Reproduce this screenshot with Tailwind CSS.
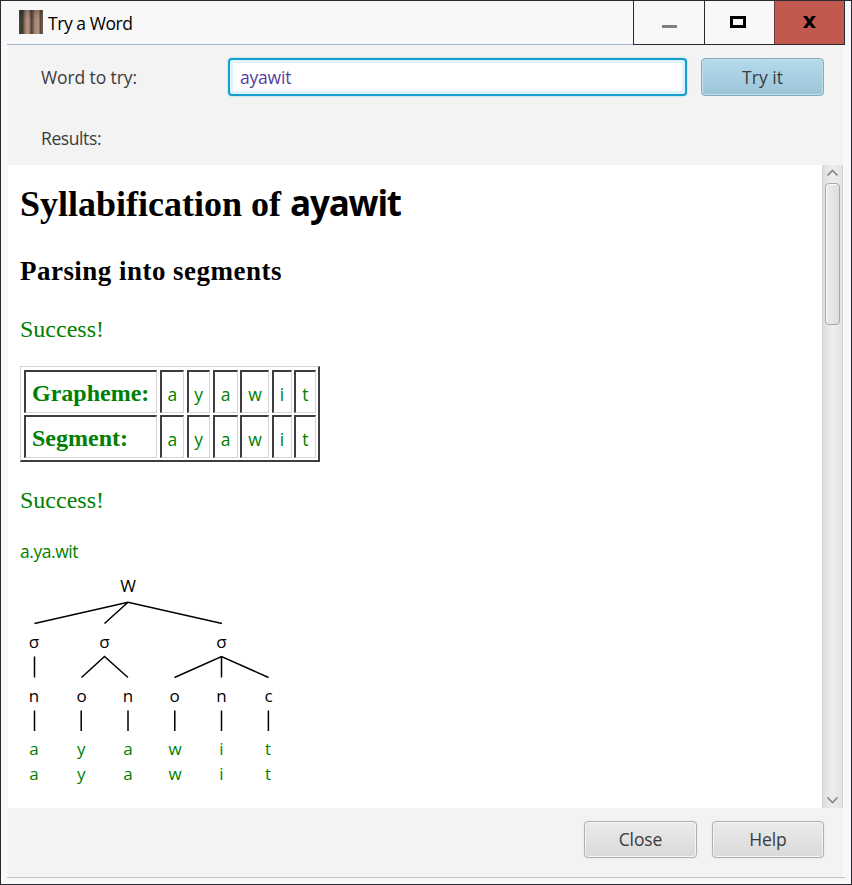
<!DOCTYPE html>
<html lang="en">
<head>
<meta charset="utf-8">
<title>Try a Word</title>
<script src="https://cdn.jsdelivr.net/npm/@tailwindcss/browser@4"></script>
</head>
<body class="h-[885px] w-[852px] overflow-hidden font-['Open_Sans','Noto_Sans',sans-serif] text-[17.5px]">
<div class="flex h-[885px] w-[852px] flex-col border border-[#2d2b31] bg-[#f8f8f8] pr-[6px] pl-[6px]">
  <header class="flex h-[44px] shrink-0">
    <div class="flex flex-1 items-start border-b border-[#a3b4c9] pl-[12px]">
      <svg class="mt-[9px] size-6" viewBox="0 0 24 24" aria-hidden="true">
        <defs>
          <linearGradient id="bark">
            <stop offset="0" stop-color="#45433b"/><stop offset=".15" stop-color="#3f3b34"/><stop offset=".24" stop-color="#8b715f"/>
            <stop offset=".34" stop-color="#b99580"/><stop offset=".43" stop-color="#a98572"/><stop offset=".5" stop-color="#4b423d"/>
            <stop offset=".58" stop-color="#66574d"/><stop offset=".66" stop-color="#a98672"/><stop offset=".82" stop-color="#b69079"/>
            <stop offset=".89" stop-color="#554941"/><stop offset="1" stop-color="#746257"/>
          </linearGradient>
          <linearGradient id="shade" x2="0" y2="1"><stop offset="0" stop-color="#000" stop-opacity=".2"/><stop offset=".4" stop-color="#000" stop-opacity="0"/></linearGradient>
        </defs>
        <path d="M0 0h24v24H0z" fill="url(#bark)"/><path d="M0 0h24v24H0z" fill="url(#shade)"/>
      </svg>
      <h1 class="mt-[10px] ml-[5px] leading-6 tracking-[-0.45px] text-black">Try a Word</h1>
    </div>
    <div class="flex border-r border-b border-l border-[#2d2b31]">
      <button class="flex w-[70px] items-center justify-center" aria-label="Minimize"><svg class="size-[18px]" viewBox="0 0 18 18"><path d="M2 11h15v3H2z" fill="#7f7f7f"/></svg></button>
      <button class="flex w-[70px] items-center justify-center border-l border-[#2d2b31] pr-[3px] pb-[1px]" aria-label="Maximize"><svg class="h-[12px] w-[16px]" viewBox="0 0 16 12"><path d="M1.500 1.500h13v9h-13z" fill="none" stroke="#000" stroke-width="3"/></svg></button>
      <button class="flex w-[70px] items-center justify-center border-l border-[#6b3a3a] bg-[#c1594f] pb-px" aria-label="Close window"><svg class="h-[12px] w-[13px]" viewBox="0 0 13 12"><path d="M0 0h4l2.500 3.500L9 0h4L8.500 6 13 12H9L6.500 8.500 4 12H0l4.500-6z"/></svg></button>
    </div>
  </header>

  <main class="mr-[2px] ml-px flex h-[832px] flex-col bg-[#f3f3f3] text-[#3b3b3b]">
    <div class="flex h-[51px] shrink-0 items-end">
      <label for="word" class="mb-[7px] ml-[33px] w-[187px] leading-6 tracking-[-0.1px]">Word to try:</label>
      <div class="flex h-[38px] w-[459px] items-center rounded-[4px] border-2 border-[#159fd1] bg-white pl-[10px] shadow-[0_0_2px_#7fcbe6,inset_0_0_0_3px_#dff2fa]"><input id="word" value="ayawit" class="w-full bg-transparent text-[17.5px] tracking-[-0.2px] text-[#563f9e] outline-none"></div>
      <button class="ml-[14px] flex h-[38px] w-[123px] items-center justify-center rounded-[4px] border border-[#82a9bc] bg-linear-to-b from-[#b2dcec] to-[#9bc4d8] pt-px shadow-[inset_0_0_0_1px_#c1e0ec]">Try it</button>
    </div>
    <div class="flex h-[69px] shrink-0 items-end pb-[15px] pl-[33px] leading-6 tracking-[-0.4px]">Results:</div>

    <div class="flex h-[643px] shrink-0 bg-white">
      <article class="flex-1 pl-[12px] text-[#008000]">
        <h2 class="mt-[17px] h-[42px] font-['Liberation_Serif',serif] text-[36px] leading-[42px] font-bold whitespace-nowrap text-black">Syllabification of <span class="font-['Open_Sans',sans-serif] text-[35px] tracking-[-1.2px]">ayawit</span></h2>
        <h3 class="mt-[31px] h-[32px] font-['Liberation_Serif',serif] text-[27px] leading-8 font-bold tracking-[0.47px] text-black">Parsing into segments</h3>
        <p class="mt-[28px] h-[28px] font-['Liberation_Serif',serif] text-[24px] leading-7">Success!</p>
        <div class="mt-[23px] grid w-[300px] grid-cols-[133px_24.500px_23.500px_25px_29px_20px_21.500px] grid-rows-[43px_43px] gap-x-[2.5px] gap-y-[2px] border-t border-r-2 border-b-2 border-l border-t-[#d3d3d3] border-r-[#3e3e42] border-b-[#3e3e42] border-l-[#d3d3d3] pt-[3px] pb-[2px] pl-[3px] *:flex *:items-center *:justify-center *:border-t-2 *:border-r *:border-b *:border-l-2 *:border-t-[#3e3e42] *:border-r-[#d3d3d3] *:border-b-[#d3d3d3] *:border-l-[#3e3e42]">
          <div class="font-['Liberation_Serif',serif] text-[24px] font-bold"><span class="w-full pt-px pl-[6px]">Grapheme:</span></div>
          <div><span class="pt-[4px]">a</span></div><div><span class="pt-[4px]">y</span></div><div><span class="pt-[4px]">a</span></div><div><span class="pt-[4px]">w</span></div><div><span class="pt-[4px]">i</span></div><div><span class="pt-[4px]">t</span></div>
          <div class="font-['Liberation_Serif',serif] text-[24px] font-bold"><span class="w-full pt-px pl-[6px]">Segment:</span></div>
          <div><span class="pt-[4px]">a</span></div><div><span class="pt-[4px]">y</span></div><div><span class="pt-[4px]">a</span></div><div><span class="pt-[4px]">w</span></div><div><span class="pt-[4px]">i</span></div><div><span class="pt-[4px]">t</span></div>
        </div>
        <p class="mt-[24px] h-[28px] font-['Liberation_Serif',serif] text-[24px] leading-7">Success!</p>
        <p class="mt-[25px] h-[24px] leading-6 tracking-[-0.45px]">a.ya.wit</p>
        <svg class="mt-[7px] block h-[225px] w-[280px]" viewBox="20 570 280 225" aria-label="Syllable tree">
          <path d="M34.500 623.500 128 602.300 222 623.500M128 602.300 104.500 623.500M34.500 656.500V677.500M81.500 677.500 104.500 656.500 128 677.500M174.500 677.500 221.500 656.500 268.500 677.500M221.500 656.500V677.500M34.500 710.500V731M81.200 710.500V731M128 710.500V731M174.800 710.500V731M221.500 710.500V731M268.400 710.500V731" fill="none" stroke="#000" stroke-width="1.500"/>
          <g fill="#000" text-anchor="middle" font-size="17">
            <text x="128" y="592">W</text>
            <text x="34" y="648">σ</text><text x="104.500" y="648">σ</text><text x="221.500" y="648">σ</text>
            <text x="34" y="702">n</text><text x="81.500" y="702">o</text><text x="128" y="702">n</text><text x="174.500" y="702">o</text><text x="221.500" y="702">n</text><text x="268.500" y="702">c</text>
          </g>
          <g fill="#008000" text-anchor="middle" font-size="17">
            <text x="34" y="755">a</text><text x="81.200" y="755">y</text><text x="128" y="755">a</text><text x="175" y="755">w</text><text x="221.500" y="755">i</text><text x="268" y="755">t</text>
            <text x="34" y="780">a</text><text x="81.200" y="780">y</text><text x="128" y="780">a</text><text x="175" y="780">w</text><text x="221.500" y="780">i</text><text x="268" y="780">t</text>
          </g>
        </svg>
      </article>
      <div class="flex w-[21px] flex-col items-center border-r border-l border-r-[#d4d4d4] border-l-[#d0d0d0] bg-linear-to-r from-[#dedede] via-[#ededed] to-[#e3e3e3]">
        <svg class="h-[18px] w-[15px] shrink-0" viewBox="0 0 15 18"><path d="M2.500 10.500 7.500 5.500 12.500 10.500" fill="none" stroke="#858585" stroke-width="1.600"/></svg>
        <div class="h-[142px] w-[15px] rounded-[4px] border border-[#a8a8a8] bg-linear-to-r from-[#ececec] to-[#dcdcdc] shadow-[inset_1px_1px_0_#fafafa]"></div>
        <svg class="mt-auto h-[18px] w-[15px] shrink-0" viewBox="0 0 15 18"><path d="M2.500 7.500 7.500 12.500 12.500 7.500" fill="none" stroke="#858585" stroke-width="1.600"/></svg>
      </div>
    </div>

    <footer class="flex gap-[15px] pt-[13px] pl-[576px]">
      <button class="h-[37px] w-[113px] rounded-[4px] border border-[#b0b0b0] bg-linear-to-b from-[#ebebeb] to-[#d9d9d9] shadow-[inset_0_0_0_1px_#f5f5f5,0_0_1px_#b8b8b8] tracking-[-0.1px]">Close</button>
      <button class="h-[37px] w-[112px] rounded-[4px] border border-[#b0b0b0] bg-linear-to-b from-[#ebebeb] to-[#d9d9d9] shadow-[inset_0_0_0_1px_#f5f5f5,0_0_1px_#b8b8b8] tracking-[-0.1px]">Help</button>
    </footer>
  </main>
  <div class="h-px w-full bg-[#c0c6ce]"></div>
</div>
</body>
</html>
